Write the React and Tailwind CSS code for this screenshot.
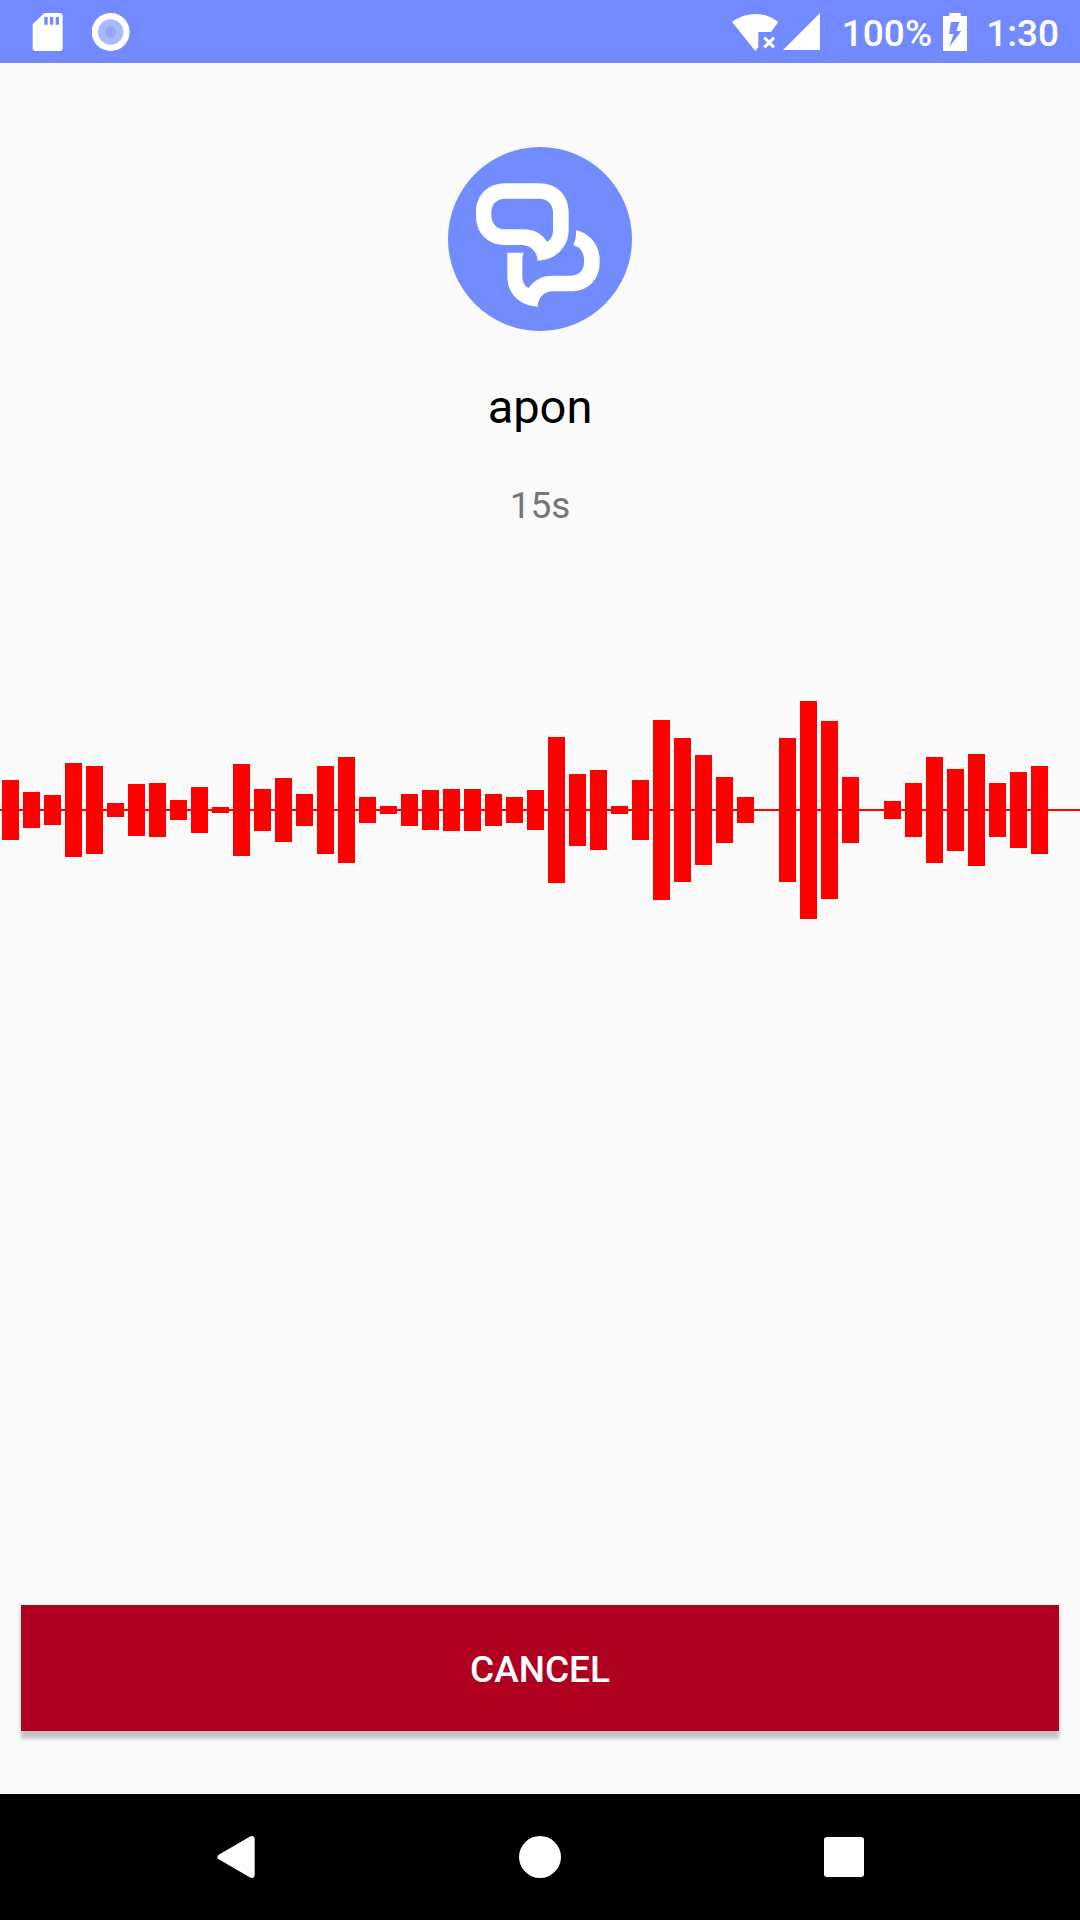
const LEVELS = [
  30, 18, 15, 47, 44, 7, 26, 27, 10, 23, 3, 46, 21, 32, 16, 44, 53, 13, 4, 16,
  20, 21, 21, 16, 13, 20, 73, 36, 40, 4, 30, 90, 72, 55, 33, 13, 0, 72, 109,
  89, 33, 0, 9, 27, 53, 41, 56, 27, 38, 44,
];

function SdCardIcon() {
  return (
    <svg className="h-[38px] w-[31px]" viewBox="0 0 93 114" aria-hidden="true">
      <path
        fillRule="evenodd"
        fill="#fff"
        d="M37 0H82Q92 0 92 10V104Q92 114 82 114H12Q2 114 2 104V34ZM37 12V35H47V12ZM54 12V35H64V12ZM71 12V35H81V12Z"
      />
    </svg>
  );
}

function RecordIcon() {
  return (
    <svg className="size-[38px]" viewBox="0 0 114 114" aria-hidden="true">
      <circle cx="56" cy="57" r="57" fill="#fff" />
      <circle cx="56" cy="57" r="38" fill="#aab8ff" />
      <circle cx="56" cy="57" r="17" fill="#95a6ff" />
    </svg>
  );
}

function WifiIcon() {
  return (
    <svg className="h-[38px] w-[47px]" viewBox="0 0 141 114" aria-hidden="true">
      <path fill="#fff" d="M0 27Q32 3 70 3T139 27L117 57H79V103L70 114Z" />
      <path d="M97 74L126 103M126 74L97 103" stroke="#fff" strokeWidth="9" />
    </svg>
  );
}

function SignalIcon() {
  return (
    <svg className="size-[37px]" viewBox="0 0 37 37" aria-hidden="true">
      <path fill="#fff" d="M37 0V37H0Z" />
    </svg>
  );
}

function BatteryIcon() {
  return (
    <svg className="h-[38px] w-[24px]" viewBox="0 0 72 114" aria-hidden="true">
      <path
        fillRule="evenodd"
        fill="#fff"
        d="M19 0H53V9H72V114H0V9H19ZM24 27L18 63H32L19 102L55 54H40L49 27Z"
      />
    </svg>
  );
}

function StatusBar() {
  return (
    <header className="flex h-[63px] items-center bg-[#7289ff] px-[21px] text-white">
      <div className="ml-[11px] flex items-center gap-[29px]">
        <SdCardIcon />
        <RecordIcon />
      </div>
      <div className="ml-auto flex items-center text-[37px] leading-[43px] font-medium">
        <WifiIcon />
        <span className="ml-1">
          <SignalIcon />
        </span>
        <span className="ml-[22px] pt-[3px]">100%</span>
        <span className="ml-[11px]">
          <BatteryIcon />
        </span>
        <span className="ml-[19px] pt-[3px]">1:30</span>
      </div>
    </header>
  );
}

function Logo() {
  return (
    <svg className="size-[184px]" viewBox="54 51 552 552" role="img" aria-label="apon">
      <circle cx="330" cy="327" r="276" fill="#738cfd" />
      <path
        fillRule="evenodd"
        fill="#fff"
        d="M228 160H327C380 160 416 195 416 247V300C416 350 378 390 323 392C321 364 302 346 275 345H228C173 345 138 310 138 257V247C138 195 173 160 228 160ZM225 206C201 206 184 223 184 247V257C184 281 201 298 225 298H280C311 298 336 311 352 336C363 328 369 316 369 302V247C369 223 352 206 328 206Z"
      />
      <path
        fill="#fff"
        d="M232 368H281Q277 377 277 392V440C277 455 284 468 296 474C312 450 336 437 368 437H423C447 437 462 421 462 397V388C462 367 450 351 430 346Q440 326 438 301C480 310 509 345 509 390V397C509 448 475 484 425 484H368C342 484 324 503 323 530C270 528 232 492 232 440Z"
      />
    </svg>
  );
}

function Waveform() {
  return (
    <svg className="h-[240px] w-full" role="img" aria-label="Audio level">
      <rect x="0" y="119" width="100%" height="2" fill="#ff0000" />
      {LEVELS.map((level, i) => (
        <rect key={i} x={2 + i * 21} y={120 - level} width="17" height={level * 2} fill="#ff0000" />
      ))}
    </svg>
  );
}

function NavBar() {
  return (
    <nav className="flex h-[126px] items-center justify-center gap-36 bg-black">
      <button type="button" aria-label="Back" className="flex w-40 justify-center">
        <svg className="h-[42px] w-[38px]" viewBox="0 0 114 126" aria-hidden="true">
          <path
            fill="#fff"
            d="M98 2Q112 -4 113 10V116Q112 130 98 124L5 70Q-3 63 5 56Z"
          />
        </svg>
      </button>
      <button type="button" aria-label="Home" className="flex w-40 justify-center">
        <span className="size-[42px] rounded-full bg-white" />
      </button>
      <button type="button" aria-label="Recent apps" className="flex w-40 justify-center">
        <span className="size-10 rounded-[3px] bg-white" />
      </button>
    </nav>
  );
}

export default function App() {
  return (
    <div className="flex min-h-screen flex-col bg-[#fafafa] font-['Roboto',sans-serif]">
      <StatusBar />
      <main className="flex flex-1 flex-col items-center pt-[84px] pb-[63px]">
        <Logo />
        <h1 className="mt-12 text-[47px] leading-[55px] text-black">apon</h1>
        <p className="mt-[50px] text-[37px] leading-[43px] text-[#757575]">15s</p>
        <div className="mt-[163px] w-full">
          <Waveform />
        </div>
        <div className="mt-auto w-full px-[21px]">
          <button
            type="button"
            className="h-[126px] w-full bg-[#b00020] pt-[2px] text-[37px] leading-[43px] font-medium text-white shadow-[0_8px_3px_0_#00000030,0_2px_6px_0_#00000018]"
          >
            CANCEL
          </button>
        </div>
      </main>
      <NavBar />
    </div>
  );
}
